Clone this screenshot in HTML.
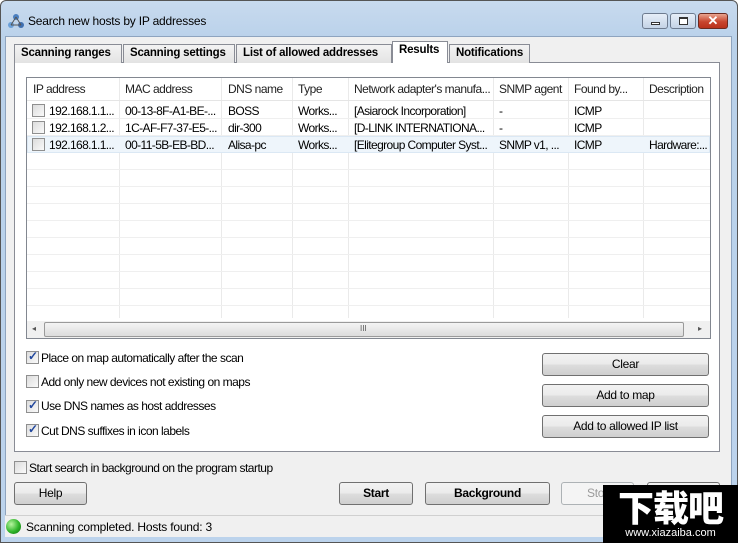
<!DOCTYPE html><html><head><style>
*{box-sizing:border-box;margin:0;padding:0}
body{width:738px;height:543px;overflow:hidden;background:#fff;font-family:"Liberation Sans",sans-serif;font-size:12px;color:#000;position:relative}
.a{position:absolute}
.btn{position:absolute;border:1px solid #707070;border-radius:3px;background:linear-gradient(#f2f2f2 0,#ebebeb 48%,#dddddd 52%,#cfcfcf 100%);text-align:center;font-size:12px;line-height:21px;letter-spacing:-0.3px}
.cb{position:absolute;width:13px;height:13px;border:1px solid #8f8f8f;background:linear-gradient(135deg,#dcdcdc,#fafafa)}
.cb.on::after{content:"✓";position:absolute;left:1px;top:-3px;font-size:12px;color:#21479d;font-weight:bold}
.lbl{position:absolute;font-size:12px;letter-spacing:-0.5px;white-space:nowrap}
.tab{position:absolute;top:44px;height:19px;border:1px solid #898c95;border-bottom:none;background:linear-gradient(#f3f3f3,#e3e3e3);font-weight:bold;font-size:11.5px;line-height:17px;padding-left:6px;letter-spacing:-0.2px;white-space:nowrap;overflow:hidden}
.col{position:absolute;top:78px;height:240px;border-left:1px solid #eaeaea}
.hd{position:absolute;top:82px;font-size:12px;letter-spacing:-0.5px;color:#222;white-space:nowrap}
.row{position:absolute;left:27px;width:683px;height:17px;border-bottom:1px solid #efefef}
.c{position:absolute;font-size:12px;letter-spacing:-0.6px;white-space:nowrap}
</style></head><body>
<div class="a" style="left:0;top:0;width:738px;height:543px;background:linear-gradient(#c8daee,#b9d1ea 40px,#bcd3ec);border:1px solid #555;border-radius:6px 6px 0 0"></div>
<div class="a" style="left:8px;top:13px;width:16px;height:16px"><svg width="16" height="16"><circle cx="8" cy="4" r="3" fill="#4a7fc0"/><circle cx="3" cy="12" r="3" fill="#6aa0d8"/><circle cx="13" cy="12" r="3" fill="#3e6fb0"/><path d="M8 4L3 12M8 4L13 12M3 12H13" stroke="#555" fill="none"/></svg></div>
<div class="a" style="left:28px;top:14px;font-size:12px;letter-spacing:-0.2px">Search new hosts by IP addresses</div>
<div class="a" style="left:642px;top:13px;width:26px;height:16px;border:1px solid #6d7b8f;border-radius:3px;background:linear-gradient(#e6eef8,#c4d3e6)"><div class="a" style="left:8px;top:8px;width:9px;height:3px;border:1px solid #333;background:#fff"></div></div>
<div class="a" style="left:670px;top:13px;width:26px;height:16px;border:1px solid #6d7b8f;border-radius:3px;background:linear-gradient(#e6eef8,#c4d3e6)"><div class="a" style="left:8px;top:3px;width:9px;height:8px;border:1px solid #333;border-top-width:2px;background:#fff"></div></div>
<div class="a" style="left:698px;top:13px;width:30px;height:16px;border:1px solid #6b2a20;border-radius:3px;background:linear-gradient(#e9a590,#c8452e 55%,#b9311c);color:#fff;font-weight:bold;text-align:center;line-height:14px;font-size:13px">✕</div>
<div class="a" style="left:5px;top:36px;width:727px;height:501px;background:#f0f0f0;border:1px solid #8ea4bf"></div>
<div class="a" style="left:14px;top:62px;width:706px;height:390px;background:#fff;border:1px solid #898c95"></div>
<div class="tab" style="left:14px;width:108px">Scanning ranges</div>
<div class="tab" style="left:123px;width:112px">Scanning settings</div>
<div class="tab" style="left:236px;width:156px">List of allowed addresses</div>
<div class="tab" style="left:392px;top:41px;height:22px;width:56px;background:#fff;border-color:#898c95;z-index:2">Results</div>
<div class="tab" style="left:449px;width:81px">Notifications</div>
<div class="a" style="left:26px;top:77px;width:685px;height:262px;border:1px solid #828790;background:#fff"></div>
<div class="col" style="left:119px"></div><div class="col" style="left:221px"></div><div class="col" style="left:292px"></div><div class="col" style="left:348px"></div><div class="col" style="left:493px"></div><div class="col" style="left:568px"></div><div class="col" style="left:643px"></div>
<div class="a" style="left:27px;top:78px;width:683px;height:23px;border-bottom:1px solid #e5e5e5"></div>
<div class="hd" style="left:33px">IP address</div><div class="hd" style="left:125px">MAC address</div><div class="hd" style="left:228px">DNS name</div><div class="hd" style="left:298px">Type</div><div class="hd" style="left:354px">Network adapter's manufa...</div><div class="hd" style="left:499px">SNMP agent</div><div class="hd" style="left:574px">Found by...</div><div class="hd" style="left:649px">Description</div>
<div class="row" style="top:102px"></div><div class="row" style="top:119px"></div><div class="row" style="top:136px;background:#eef5fb;border:1px solid #dbe8f4"></div>
<div class="row" style="top:153px"></div><div class="row" style="top:170px"></div><div class="row" style="top:187px"></div><div class="row" style="top:204px"></div><div class="row" style="top:221px"></div><div class="row" style="top:238px"></div><div class="row" style="top:255px"></div><div class="row" style="top:272px"></div><div class="row" style="top:289px"></div><div class="row" style="top:306px"></div>
<div class="cb" style="left:32px;top:104px"></div><div class="cb" style="left:32px;top:121px"></div><div class="cb" style="left:32px;top:138px"></div>
<div class="c" style="left:49px;top:104px">192.168.1.1...</div><div class="c" style="left:125px;top:104px">00-13-8F-A1-BE-...</div><div class="c" style="left:228px;top:104px">BOSS</div><div class="c" style="left:298px;top:104px">Works...</div><div class="c" style="left:354px;top:104px">[Asiarock Incorporation]</div><div class="c" style="left:499px;top:104px">-</div><div class="c" style="left:574px;top:104px">ICMP</div>
<div class="c" style="left:49px;top:121px">192.168.1.2...</div><div class="c" style="left:125px;top:121px">1C-AF-F7-37-E5-...</div><div class="c" style="left:228px;top:121px">dir-300</div><div class="c" style="left:298px;top:121px">Works...</div><div class="c" style="left:354px;top:121px">[D-LINK INTERNATIONA...</div><div class="c" style="left:499px;top:121px">-</div><div class="c" style="left:574px;top:121px">ICMP</div>
<div class="c" style="left:49px;top:138px">192.168.1.1...</div><div class="c" style="left:125px;top:138px">00-11-5B-EB-BD...</div><div class="c" style="left:228px;top:138px">Alisa-pc</div><div class="c" style="left:298px;top:138px">Works...</div><div class="c" style="left:354px;top:138px">[Elitegroup Computer Syst...</div><div class="c" style="left:499px;top:138px">SNMP v1, ...</div><div class="c" style="left:574px;top:138px">ICMP</div><div class="c" style="left:649px;top:138px">Hardware:...</div>
<div class="a" style="left:27px;top:321px;width:683px;height:17px;background:#f0f0f0"></div>
<div class="a" style="left:32px;top:324px;font-size:8px;color:#555">◂</div><div class="a" style="left:698px;top:324px;font-size:8px;color:#555">▸</div>
<div class="a" style="left:44px;top:322px;width:640px;height:15px;border:1px solid #9a9a9a;border-radius:2px;background:linear-gradient(#f4f4f4,#dcdcdc)"></div>
<div class="a" style="left:360px;top:324px;font-size:8px;color:#555">III</div>
<div class="cb on" style="left:26px;top:351px"></div><div class="lbl" style="left:41px;top:351px">Place on map automatically after the scan</div>
<div class="cb" style="left:26px;top:375px"></div><div class="lbl" style="left:41px;top:375px">Add only new devices not existing on maps</div>
<div class="cb on" style="left:26px;top:400px"></div><div class="lbl" style="left:41px;top:399px">Use DNS names as host addresses</div>
<div class="cb on" style="left:26px;top:424px"></div><div class="lbl" style="left:41px;top:424px">Cut DNS suffixes in icon labels</div>
<div class="btn" style="left:542px;top:353px;width:167px;height:23px">Clear</div>
<div class="btn" style="left:542px;top:384px;width:167px;height:23px">Add to map</div>
<div class="btn" style="left:542px;top:415px;width:167px;height:23px">Add to allowed IP list</div>
<div class="cb" style="left:14px;top:461px"></div><div class="lbl" style="left:29px;top:461px">Start search in background on the program startup</div>
<div class="btn" style="left:14px;top:482px;width:73px;height:23px">Help</div>
<div class="btn" style="left:339px;top:482px;width:74px;height:23px;font-weight:bold">Start</div>
<div class="btn" style="left:425px;top:482px;width:125px;height:23px;font-weight:bold">Background</div>
<div class="btn" style="left:561px;top:482px;width:73px;height:23px;border-color:#adb2b5;background:#f4f4f4;color:#9a9a9a;text-align:left;padding-left:25px">Stop</div>
<div class="btn" style="left:647px;top:482px;width:73px;height:23px"></div>
<div class="a" style="left:5px;top:515px;width:727px;height:22px;background:#f0f0f0;border-top:1px solid #d0d0d0"></div>
<div class="a" style="left:6px;top:519px;width:15px;height:15px;border-radius:50%;background:radial-gradient(circle at 35% 35%,#b8f5a0,#2fb52a 55%,#0c6a0c)"></div>
<div class="a" style="left:26px;top:520px;font-size:12px;letter-spacing:-0.2px">Scanning completed. Hosts found: 3</div>
<div class="a" style="left:603px;top:485px;width:135px;height:58px;background:#000;color:#fff;text-align:center">
<div style="font-family:'Noto Sans CJK SC',sans-serif;font-weight:900;font-size:36px;line-height:42px;letter-spacing:-1px">下载吧</div>
<div style="font-size:11px;line-height:12px">www.xiazaiba.com</div></div>
</body></html>
